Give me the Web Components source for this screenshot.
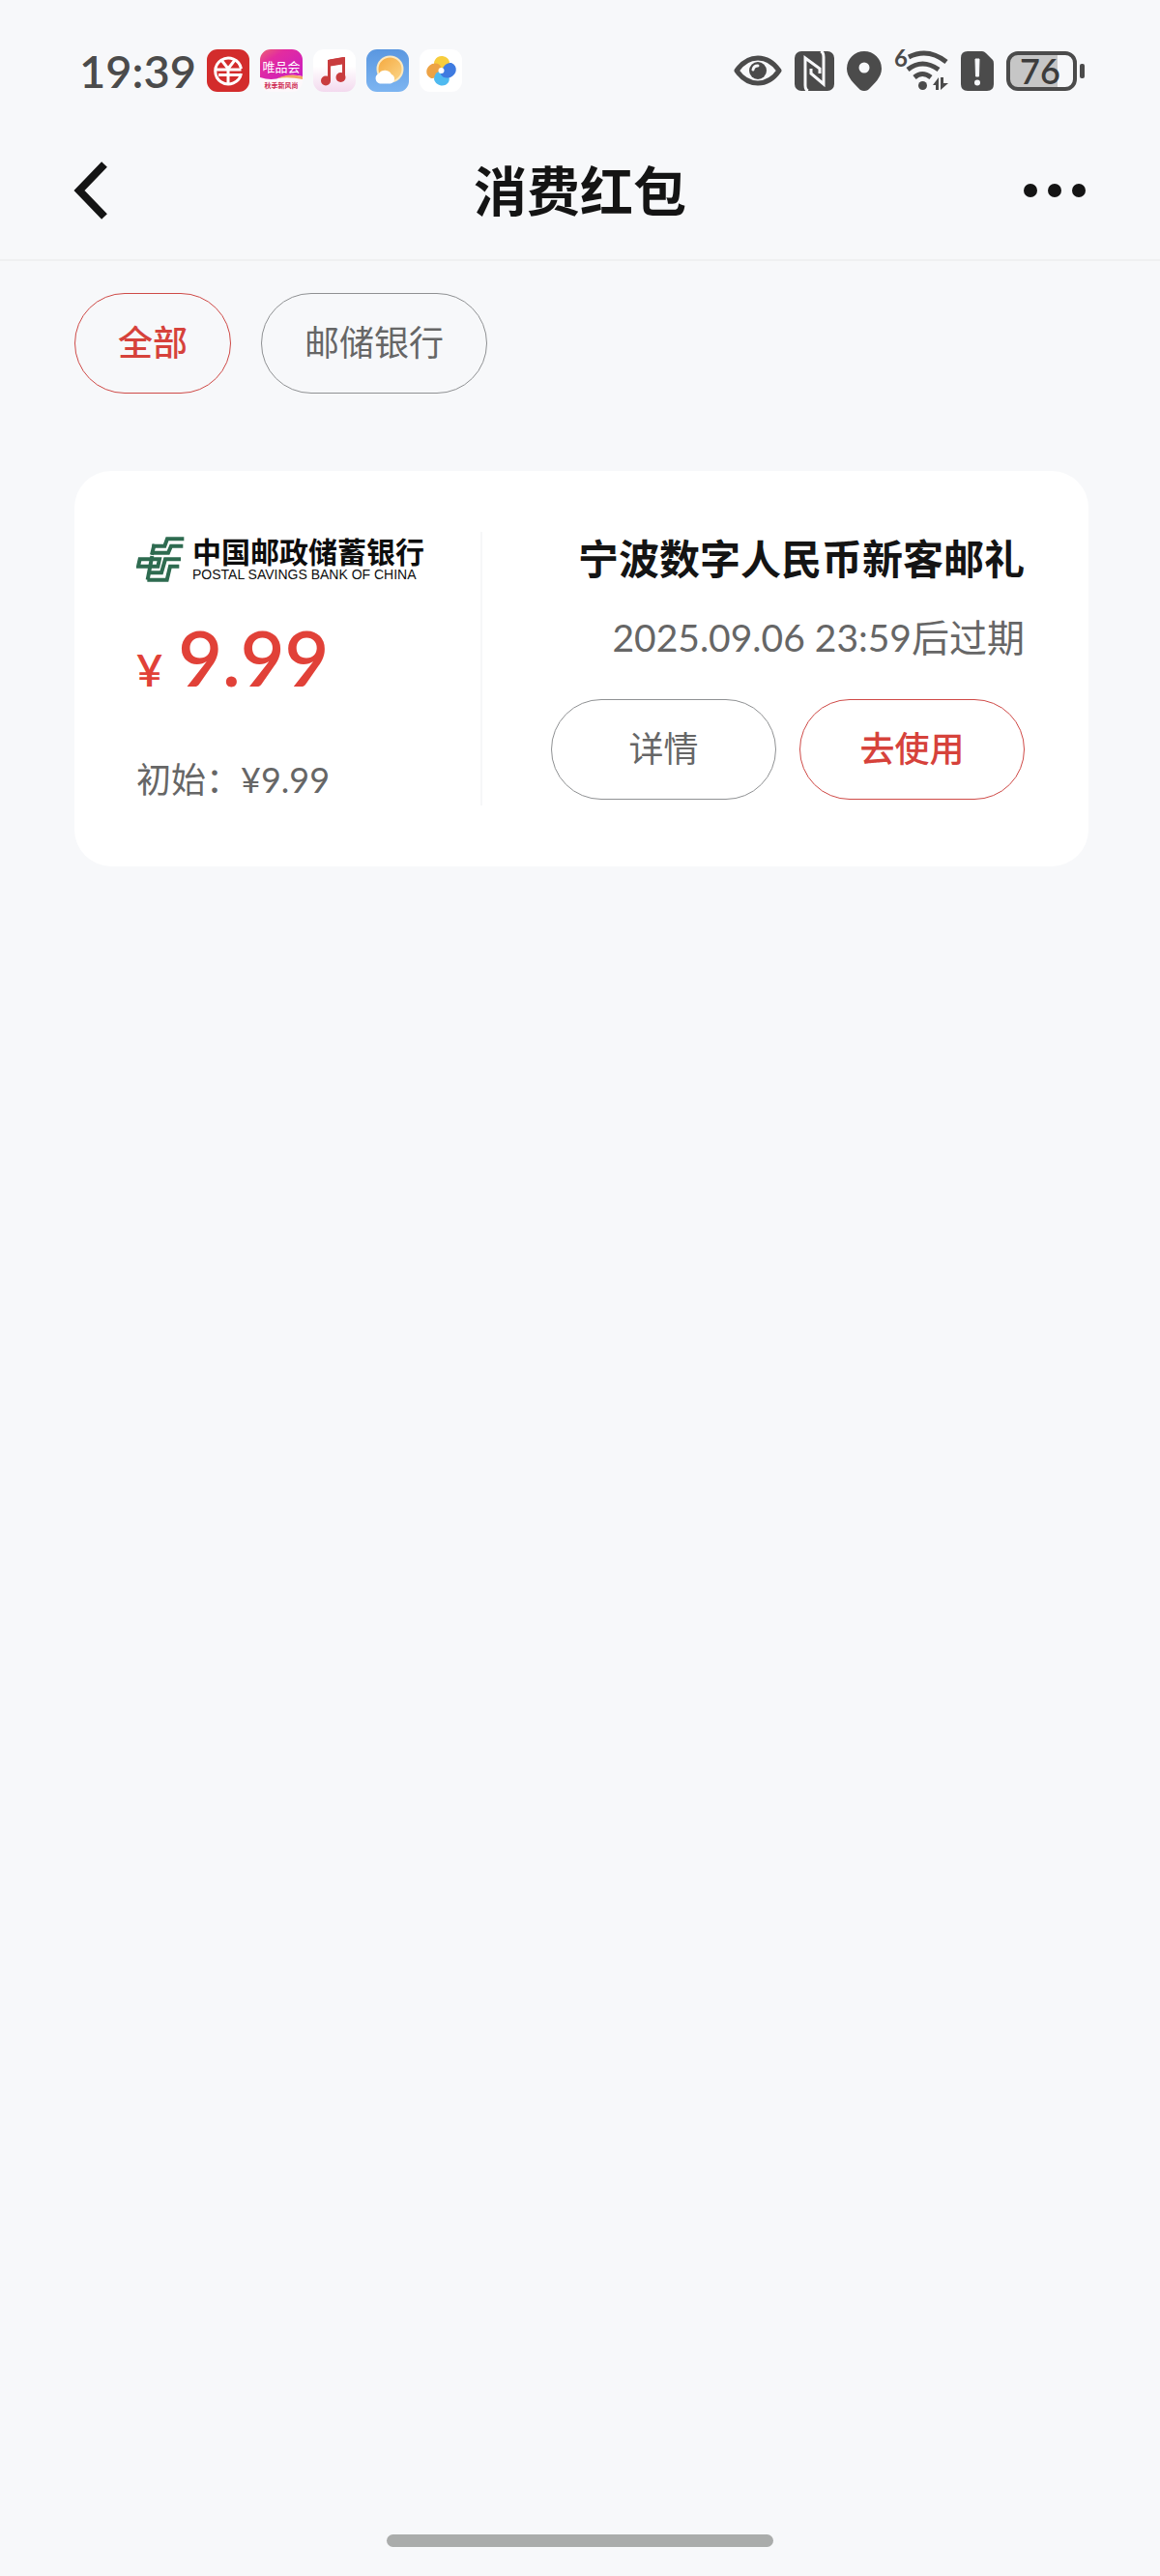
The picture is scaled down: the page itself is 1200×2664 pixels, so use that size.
<!DOCTYPE html>
<html lang="zh-CN">
<head>
<meta charset="UTF-8">
<meta name="viewport" content="width=device-width, initial-scale=1">
<title>消费红包</title>
<style>
    body {
        margin: 0;
        background-color: #f7f8fa;
        font-family: Lato, "Noto Sans CJK SC", sans-serif;
        color: #141414;
    }
</style>
</head>
<body>
<red-packet-page>
    <status-bar slot="status" time="19:39" battery="76"></status-bar>
    <page-header slot="header">消费红包</page-header>
    <filter-tabs slot="filters">
        <pill-button tone="red">全部</pill-button>
        <pill-button>邮储银行</pill-button>
    </filter-tabs>
    <coupon-card amount="9.99">
        <bank-logo slot="logo"></bank-logo>
        <span slot="initial">初始：¥9.99</span>
        <span slot="title">宁波数字人民币新客邮礼</span>
        <span slot="expiry">2025.09.06 23:59后过期</span>
        <pill-button slot="actions" wide>详情</pill-button>
        <pill-button slot="actions" wide tone="red">去使用</pill-button>
    </coupon-card>
</red-packet-page>

<script>
class RedPacketPage extends HTMLElement {
    constructor() {
        super();
        this.attachShadow({ mode: 'open' });
        this.shadowRoot.innerHTML = `
            <style>
                :host {
                    display: flex;
                    flex-direction: column;
                    min-height: 100vh;
                }
                main {
                    flex: 1;
                    display: flex;
                    flex-direction: column;
                    gap: 80px;
                    padding: 33px 74px 80px 77px;
                }
                .home-bar {
                    align-self: center;
                    width: 33.33%;
                    height: 13px;
                    margin-bottom: 30px;
                    border-radius: 7px;
                    background-color: #aaacab;
                }
            </style>
            <slot name="status"></slot>
            <slot name="header"></slot>
            <main>
                <slot name="filters"></slot>
                <slot></slot>
            </main>
            <div class="home-bar"></div>
        `;
    }
}

class StatusBar extends HTMLElement {
    constructor() {
        super();
        this.attachShadow({ mode: 'open' });
        this.shadowRoot.innerHTML = `
            <style>
                :host {
                    display: flex;
                    justify-content: space-between;
                    align-items: center;
                    padding: 51px 78px 32px 82px;
                    color: #4b4b4b;
                }
                .left, .right {
                    display: flex;
                    align-items: center;
                }
                .left { gap: 11px; }
                .right { gap: 13px; }
                .time {
                    font-size: 47px;
                    font-weight: 600;
                    line-height: 44px;
                }
                svg {
                    display: block;
                    overflow: visible;
                }
                svg text { font-family: Lato, "Noto Sans CJK SC", sans-serif; }
            </style>
            <div class="left">
                <span class="time"></span>
                <svg width="44" height="44" viewBox="0 0 44 44">
                    <rect width="44" height="44" rx="11" fill="#d32c2c"/>
                    <g fill="none" stroke="#fff" stroke-width="3">
                        <path d="M35.500 20A13.500 13.500 0 1 0 35.500 25"/>
                        <path d="M15 11L22 20L29 11M22 20V36M9 21H35.500M12 26.500H36"/>
                    </g>
                </svg>
                <svg width="44" height="44" viewBox="0 0 44 44">
                    <defs>
                        <linearGradient id="pink" x1="0" y1="0" x2="1" y2="1">
                            <stop offset="0" stop-color="#ec6473"/>
                            <stop offset=".3" stop-color="#e32c9f"/>
                            <stop offset="1" stop-color="#c81cc4"/>
                        </linearGradient>
                    </defs>
                    <rect width="44" height="44" rx="11" fill="#fdf8fb"/>
                    <path d="M0 29V11A11 11 0 0 1 11 0H33A11 11 0 0 1 44 11V28Q32 25 22 29T0 29Z" fill="url(#pink)"/>
                    <path d="M18 30Q30 24 44 28V31Q30 28 18 30Z" fill="#f3a765"/>
                    <text x="22" y="23" font-size="13" text-anchor="middle" fill="#fff">唯品会</text>
                    <text x="22" y="40" font-size="7" font-weight="700" text-anchor="middle" fill="#cf2b54">秋季新风尚</text>
                </svg>
                <svg width="44" height="44" viewBox="0 0 44 44">
                    <defs>
                        <linearGradient id="music" x1="0" y1="0" x2="0" y2="1">
                            <stop offset=".4" stop-color="#fff"/>
                            <stop offset="1" stop-color="#f3d9ee"/>
                        </linearGradient>
                    </defs>
                    <rect width="44" height="44" rx="11" fill="url(#music)"/>
                    <g fill="#c93c3e">
                        <path d="M15 13Q15 11 17 10.500L31 8Q33 8 33 10V29H30V15L18 17V33H15Z"/>
                        <path d="M15 11L33 8V15L15 18Z"/>
                        <circle cx="13" cy="32.500" r="5"/>
                        <circle cx="28.500" cy="29" r="5"/>
                    </g>
                </svg>
                <svg width="44" height="44" viewBox="0 0 44 44">
                    <defs>
                        <linearGradient id="sky" x1="0" y1="0" x2="0" y2="1">
                            <stop offset="0" stop-color="#5a97e0"/>
                            <stop offset="1" stop-color="#7db5f1"/>
                        </linearGradient>
                        <linearGradient id="sun" x1="0" y1="0" x2="1" y2="1">
                            <stop offset="0" stop-color="#f5a83c"/>
                            <stop offset="1" stop-color="#fbd68a"/>
                        </linearGradient>
                    </defs>
                    <rect width="44" height="44" rx="11" fill="url(#sky)"/>
                    <circle cx="24.500" cy="20.500" r="13" fill="url(#sun)" stroke="#fde8bd" stroke-width="2"/>
                    <path d="M14 35.500A5.500 5.500 0 0 1 13 25A7.500 7.500 0 0 1 26 26A5 5 0 0 1 25 35.500Z" fill="#fff"/>
                </svg>
                <svg width="44" height="44" viewBox="0 0 44 44">
                    <rect width="44" height="44" rx="11" fill="#fff"/>
                    <path d="M24 21C17 21 13 16 16 11C19 5 29 6 31 13Q31 19 24 21Z" fill="#f7cd3d"/>
                    <path d="M22 18C22 25 17 31 12 30C5 27 6 18 13 15Q20 13 22 18Z" fill="#eda345"/>
                    <path d="M20 23C27 22 33 28 30 34C26 40 17 38 15 31Q15 25 20 23Z" fill="#4fbaf0"/>
                    <path d="M22 26C22 19 28 13 33 14C40 17 39 26 32 29Q25 31 22 26Z" fill="#3f7be0"/>
                    <circle cx="22.500" cy="22" r="3" fill="#fff"/>
                </svg>
            </div>
            <div class="right">
                <svg width="50" height="32" viewBox="0 0 50 32">
                    <path d="M3 16Q12 3 25 3T47 16Q38 29 25 29T3 16Z" fill="none" stroke="#4b4b4b" stroke-width="5" stroke-linejoin="round"/>
                    <circle cx="25" cy="16" r="9" fill="#4b4b4b"/>
                    <path d="M20 15A5 5 0 0 1 25 11" fill="none" stroke="#f7f8fa" stroke-width="3" stroke-linecap="round"/>
                </svg>
                <svg width="41" height="41" viewBox="0 0 41 41">
                    <rect width="41" height="41" rx="7" fill="#4b4b4b"/>
                    <path d="M14 41Q11 40 11 35V7L26 18V23M27 0Q30 1 30 6V34L17 23V18" fill="none" stroke="#f7f8fa" stroke-width="3"/>
                </svg>
                <svg width="36" height="41" viewBox="0 0 36 41">
                    <path d="M18 0A18 18 0 0 1 36 18C36 27 28 34 22 40Q18 42 14 40C8 34 0 27 0 18A18 18 0 0 1 18 0Z" fill="#4b4b4b"/>
                    <circle cx="18" cy="17" r="5.500" fill="#f7f8fa"/>
                </svg>
                <svg width="56" height="44" viewBox="0 0 56 44">
                    <text x="0" y="18" font-size="24" font-weight="700" fill="#4b4b4b">6</text>
                    <g fill="none" stroke="#4b4b4b" stroke-width="5">
                        <path d="M15 8Q35 -2 54 13"/>
                        <path d="M14 21Q29 9 46 21"/>
                        <path d="M21 29Q29 22 38 29"/>
                    </g>
                    <circle cx="29.500" cy="37.500" r="4.500" fill="#4b4b4b"/>
                    <path d="M40 37L46 29V42H43V37ZM48 29H51V35H56L48 42Z" fill="#4b4b4b"/>
                </svg>
                <svg width="34" height="41" viewBox="0 0 34 41">
                    <path d="M7 0H22Q24 0 26 2L33 9Q34 10 34 13V34Q34 41 27 41H7Q0 41 0 34V7Q0 0 7 0Z" fill="#4b4b4b"/>
                    <path d="M15 8H19L18.500 26H15.500Z" fill="#f7f8fa" stroke="#f7f8fa" stroke-linejoin="round"/>
                    <circle cx="17" cy="32.500" r="3" fill="#f7f8fa"/>
                </svg>
                <svg width="81" height="41" viewBox="0 0 81 41">
                    <path d="M13 2H53V39H13Q2 39 2 28V13Q2 2 13 2Z" fill="#c6c6c6"/>
                    <rect x="2" y="2" width="69" height="37" rx="10" fill="none" stroke="#4b4b4b" stroke-width="4"/>
                    <rect x="76" y="13" width="5" height="15" rx="2" fill="#4b4b4b"/>
                    <text class="level" x="35" y="34" font-size="36" font-weight="600" text-anchor="middle" fill="#3c3c3c"></text>
                </svg>
            </div>
        `;
    }

    connectedCallback() {
        this.shadowRoot.querySelector('.time').textContent = this.getAttribute('time');
        this.shadowRoot.querySelector('.level').textContent = this.getAttribute('battery');
    }
}

class PageHeader extends HTMLElement {
    constructor() {
        super();
        this.attachShadow({ mode: 'open' });
        this.shadowRoot.innerHTML = `
            <style>
                :host { display: block; }
                header {
                    display: grid;
                    grid-template-columns: 1fr auto 1fr;
                    align-items: center;
                    padding: 30px 72px 31px;
                    border-bottom: 2px solid #eff0f1;
                }
                h1 {
                    margin: 0;
                    font-size: 55px;
                    font-weight: 700;
                    line-height: 80px;
                }
                button {
                    display: flex;
                    padding: 4px;
                    border: none;
                    background: none;
                    cursor: pointer;
                }
                .more { justify-self: end; }
            </style>
            <header>
                <button aria-label="返回">
                    <svg width="36" height="60" viewBox="0 0 36 60">
                        <path d="M32 3L6 30L32 57" fill="none" stroke="#141414" stroke-width="8"/>
                    </svg>
                </button>
                <h1><slot></slot></h1>
                <button class="more" aria-label="更多">
                    <svg width="66" height="16" viewBox="0 0 66 16" fill="#141414">
                        <circle cx="8" cy="8" r="7"/>
                        <circle cx="33" cy="8" r="7"/>
                        <circle cx="58" cy="8" r="7"/>
                    </svg>
                </button>
            </header>
        `;
    }
}

class FilterTabs extends HTMLElement {
    constructor() {
        super();
        this.attachShadow({ mode: 'open' });
        this.shadowRoot.innerHTML = `
            <style>
                :host {
                    display: flex;
                    flex-wrap: wrap;
                    gap: 31px;
                }
            </style>
            <slot></slot>
        `;
    }
}

class PillButton extends HTMLElement {
    constructor() {
        super();
        this.attachShadow({ mode: 'open' });
        this.shadowRoot.innerHTML = `
            <style>
                :host { display: block; }
                button {
                    width: 100%;
                    padding: 25px 44px 27px;
                    border: 1px solid #8f9193;
                    border-radius: 52px;
                    background: none;
                    color: #666;
                    font-family: inherit;
                    font-size: 36px;
                    font-weight: 400;
                    line-height: 50px;
                    white-space: nowrap;
                    cursor: pointer;
                }
                :host([wide]) { width: 233px; }
                :host([tone="red"]) button {
                    border-color: #cf4a47;
                    color: #d6423b;
                    font-weight: 500;
                }
            </style>
            <button><slot></slot></button>
        `;
    }
}

class BankLogo extends HTMLElement {
    constructor() {
        super();
        this.attachShadow({ mode: 'open' });
        this.shadowRoot.innerHTML = `
            <style>
                :host {
                    display: flex;
                    align-items: center;
                    gap: 8px;
                    height: 56px;
                    color: #0d0d0d;
                    white-space: nowrap;
                }
                .names {
                    display: flex;
                    flex-direction: column;
                }
                .cn {
                    font-size: 30px;
                    font-weight: 700;
                    line-height: 32px;
                }
                .en {
                    font-family: "Liberation Sans", sans-serif;
                    font-size: 14px;
                    line-height: 16px;
                }
            </style>
            <svg width="50" height="47" viewBox="243 252 150 141" fill="none" stroke="#2e6b50" stroke-width="12">
                <path d="M292 281H331L339 259H391"/>
                <path d="M289 302H342L351 281H388"/>
                <path d="M299 275L291 308M292 312L278 386"/>
                <path d="M254 322H315L310 344H249Z"/>
                <path d="M284 364H321L333 322H381"/>
                <path d="M277 386H338L348 344H376"/>
            </svg>
            <div class="names">
                <span class="cn">中国邮政储蓄银行</span>
                <span class="en">POSTAL SAVINGS BANK OF CHINA</span>
            </div>
        `;
    }
}

class CouponCard extends HTMLElement {
    constructor() {
        super();
        this.attachShadow({ mode: 'open' });
        this.shadowRoot.innerHTML = `
            <style>
                :host { display: block; }
                article {
                    display: flex;
                    padding: 63px 66px 63px 64px;
                    border-radius: 38px;
                    background-color: #fff;
                }
                .value {
                    box-sizing: border-box;
                    flex: 0 0 39%;
                    border-right: 2px solid #f6f7f8;
                }
                .price {
                    display: flex;
                    align-items: baseline;
                    gap: 16px;
                    margin: 24px 0 49px;
                    color: #e14138;
                    font-size: 79px;
                    font-weight: 600;
                    line-height: 100px;
                }
                .price small {
                    font-size: 47px;
                    line-height: 50px;
                }
                .initial {
                    color: #666;
                    font-size: 36px;
                    line-height: 54px;
                }
                .info {
                    flex: 1;
                    display: flex;
                    flex-direction: column;
                    text-align: right;
                }
                h2 {
                    margin: 0;
                    font-size: 42px;
                    font-weight: 700;
                    line-height: 56px;
                }
                .expiry {
                    margin: 26px 0 36px;
                    color: #666;
                    font-size: 39px;
                    line-height: 55px;
                }
                .actions {
                    display: flex;
                    justify-content: flex-end;
                    gap: 24px;
                }
            </style>
            <article>
                <div class="value">
                    <slot name="logo"></slot>
                    <div class="price"><small>¥</small><span class="amount"></span></div>
                    <div class="initial"><slot name="initial"></slot></div>
                </div>
                <div class="info">
                    <h2><slot name="title"></slot></h2>
                    <div class="expiry"><slot name="expiry"></slot></div>
                    <div class="actions"><slot name="actions"></slot></div>
                </div>
            </article>
        `;
    }

    connectedCallback() {
        this.shadowRoot.querySelector('.amount').textContent = this.getAttribute('amount');
    }
}

customElements.define('red-packet-page', RedPacketPage);
customElements.define('status-bar', StatusBar);
customElements.define('page-header', PageHeader);
customElements.define('filter-tabs', FilterTabs);
customElements.define('pill-button', PillButton);
customElements.define('bank-logo', BankLogo);
customElements.define('coupon-card', CouponCard);
</script>
</body>
</html>
